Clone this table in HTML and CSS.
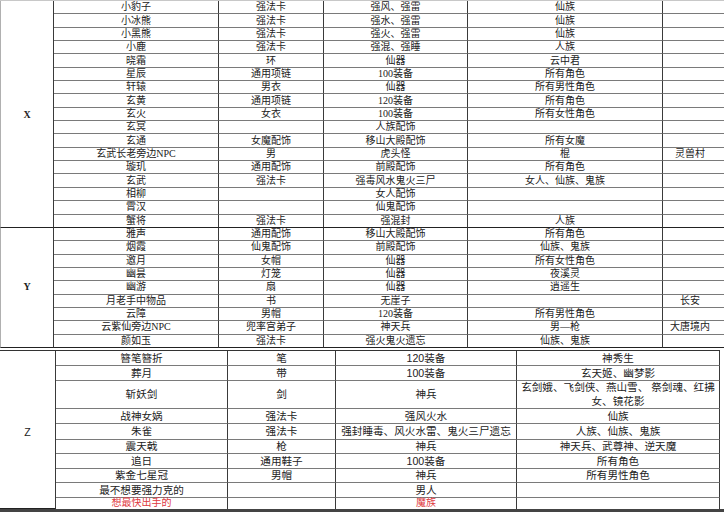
FILE: index.html
```html
<!DOCTYPE html>
<html lang="zh-CN">
<head>
<meta charset="utf-8">
<title>表</title>
<link rel="stylesheet" href="styles.css">
</head>
<body>
<div class="page">
  <div class="sheet top">
    <div class="c lbl lx">X</div>
    <div class="c lbl ly">Y</div>

    <div class="c">小豹子</div><div class="c">强法卡</div><div class="c">强风、强雷</div><div class="c">仙族</div><div class="c"></div>
    <div class="c">小冰熊</div><div class="c">强法卡</div><div class="c">强水、强雷</div><div class="c">仙族</div><div class="c"></div>
    <div class="c">小黑熊</div><div class="c">强法卡</div><div class="c">强火、强雷</div><div class="c">仙族</div><div class="c"></div>
    <div class="c">小鹿</div><div class="c">强法卡</div><div class="c">强混、强睡</div><div class="c">人族</div><div class="c"></div>
    <div class="c">晓霜</div><div class="c">环</div><div class="c">仙器</div><div class="c">云中君</div><div class="c"></div>
    <div class="c">星辰</div><div class="c">通用项链</div><div class="c">100装备</div><div class="c">所有角色</div><div class="c"></div>
    <div class="c">轩辕</div><div class="c">男衣</div><div class="c">仙器</div><div class="c">所有男性角色</div><div class="c"></div>
    <div class="c">玄黄</div><div class="c">通用项链</div><div class="c">120装备</div><div class="c">所有角色</div><div class="c"></div>
    <div class="c">玄火</div><div class="c">女衣</div><div class="c">100装备</div><div class="c">所有女性角色</div><div class="c"></div>
    <div class="c">玄冥</div><div class="c"></div><div class="c">人族配饰</div><div class="c"></div><div class="c"></div>
    <div class="c">玄通</div><div class="c">女魔配饰</div><div class="c">移山大殿配饰</div><div class="c">所有女魔</div><div class="c"></div>
    <div class="c">玄武长老旁边NPC</div><div class="c">男</div><div class="c">虎头怪</div><div class="c">棍</div><div class="c loc">灵兽村</div>
    <div class="c">璇玑</div><div class="c">通用配饰</div><div class="c">前殿配饰</div><div class="c">所有角色</div><div class="c"></div>
    <div class="c">玄武</div><div class="c">强法卡</div><div class="c">强毒风水鬼火三尸</div><div class="c">女人、仙族、鬼族</div><div class="c"></div>
    <div class="c">相柳</div><div class="c"></div><div class="c">女人配饰</div><div class="c"></div><div class="c"></div>
    <div class="c">霄汉</div><div class="c"></div><div class="c">仙鬼配饰</div><div class="c"></div><div class="c"></div>
    <div class="c e">蟹将</div><div class="c e">强法卡</div><div class="c e">强混封</div><div class="c e">人族</div><div class="c e"></div>

    <div class="c">雅声</div><div class="c">通用配饰</div><div class="c">移山大殿配饰</div><div class="c">所有角色</div><div class="c"></div>
    <div class="c">烟霞</div><div class="c">仙鬼配饰</div><div class="c">前殿配饰</div><div class="c">仙族、鬼族</div><div class="c"></div>
    <div class="c">邀月</div><div class="c">女帽</div><div class="c">仙器</div><div class="c">所有女性角色</div><div class="c"></div>
    <div class="c">幽昙</div><div class="c">灯笼</div><div class="c">仙器</div><div class="c">夜溪灵</div><div class="c"></div>
    <div class="c">幽游</div><div class="c">扇</div><div class="c">仙器</div><div class="c">逍遥生</div><div class="c"></div>
    <div class="c">月老手中物品</div><div class="c">书</div><div class="c">无崖子</div><div class="c"></div><div class="c loc">长安</div>
    <div class="c">云障</div><div class="c">男帽</div><div class="c">120装备</div><div class="c">所有男性角色</div><div class="c"></div>
    <div class="c">云紫仙旁边NPC</div><div class="c">兜率宫弟子</div><div class="c">神天兵</div><div class="c">男—枪</div><div class="c loc">大唐境内</div>
    <div class="c e">颜如玉</div><div class="c e">强法卡</div><div class="c e">强火鬼火遗忘</div><div class="c e">仙族、鬼族</div><div class="c e"></div>
  </div>

  <div class="sheet zt">
    <div class="c lbl lz">Z</div>
    <div class="c">簪笔簪折</div><div class="c">笔</div><div class="c">120装备</div><div class="c">神秀生</div>
    <div class="c">葬月</div><div class="c">带</div><div class="c">100装备</div><div class="c">玄天姬、幽梦影</div>
    <div class="c">斩妖剑</div><div class="c">剑</div><div class="c">神兵</div><div class="c wrap">玄剑娥、飞剑侠、燕山雪、 祭剑魂、红拂女、镜花影</div>
    <div class="c">战神女娲</div><div class="c">强法卡</div><div class="c">强风火水</div><div class="c">仙族</div>
    <div class="c">朱雀</div><div class="c">强法卡</div><div class="c">强封睡毒、风火水雷、鬼火三尸遗忘</div><div class="c">人族、仙族、鬼族</div>
    <div class="c">震天戟</div><div class="c">枪</div><div class="c">神兵</div><div class="c">神天兵、武尊神、逆天魔</div>
    <div class="c">追日</div><div class="c">通用鞋子</div><div class="c">100装备</div><div class="c">所有角色</div>
    <div class="c">紫金七星冠</div><div class="c">男帽</div><div class="c">神兵</div><div class="c">所有男性角色</div>
    <div class="c">最不想要强力克的</div><div class="c"></div><div class="c">男人</div><div class="c"></div>
    <div class="c last red">想最快出手的</div><div class="c last"></div><div class="c last red">魔族</div><div class="c last"></div>
  </div>
  <div class="bar"></div>
</div>
</body>
</html>
```

FILE: styles.css
```css
html, body {
  margin: 0;
  padding: 0;
  background: #ffffff;
}

.page {
  width: 724px;
  height: 512px;
  overflow: hidden;
}

.sheet {
  display: grid;
  color: #222222;
}

.top {
  width: 730px;
  grid-template-columns: 54px 165px 105px 144px 195px 67px;
  grid-auto-rows: 13.35px;
  border-top: 1px solid #c8c8c8;
  font-family: "Liberation Serif", "Noto Sans CJK SC", serif;
  font-size: 10px;
  line-height: 1;
}

.c {
  box-sizing: border-box;
  border-right: 1px solid #3a3a3a;
  border-bottom: 1px solid #7a7a7a;
  display: flex;
  align-items: center;
  justify-content: center;
  white-space: nowrap;
}

.top .e {
  border-bottom-color: #222222;
}

.lbl {
  grid-column: 1;
  border-bottom: 1px solid #222222;
  font-weight: bold;
}

.lx {
  grid-row: 1 / span 17;
  border-left: 1px solid #b0b0b0;
  padding-top: 3px;
}

.ly {
  grid-row: 18 / span 9;
  border-left: 1px solid #b0b0b0;
}

.loc {
  padding-right: 12px;
}

.zt {
  margin-top: 2px;
  width: 720px;
  grid-template-columns: 56px 172px 108px 181px 203px;
  grid-template-rows: 15px 15px 28px 15px 16px 14px 15px 14px 15px 11px;
  border-top: 1px solid #333333;
  font-family: "Liberation Sans", "Noto Sans CJK SC", sans-serif;
  font-size: 10.6px;
  line-height: 1;
}

.lz {
  grid-row: 1 / span 10;
  font-weight: normal;
  padding-top: 5px;
}

.last {
  border-bottom: none;
  font-size: 10px;
}

.wrap {
  white-space: normal;
  text-align: center;
  line-height: 14px;
  padding: 0 2px;
}

.red {
  color: #e0393e;
}

.bar {
  height: 3px;
  background: #444444;
}
```
